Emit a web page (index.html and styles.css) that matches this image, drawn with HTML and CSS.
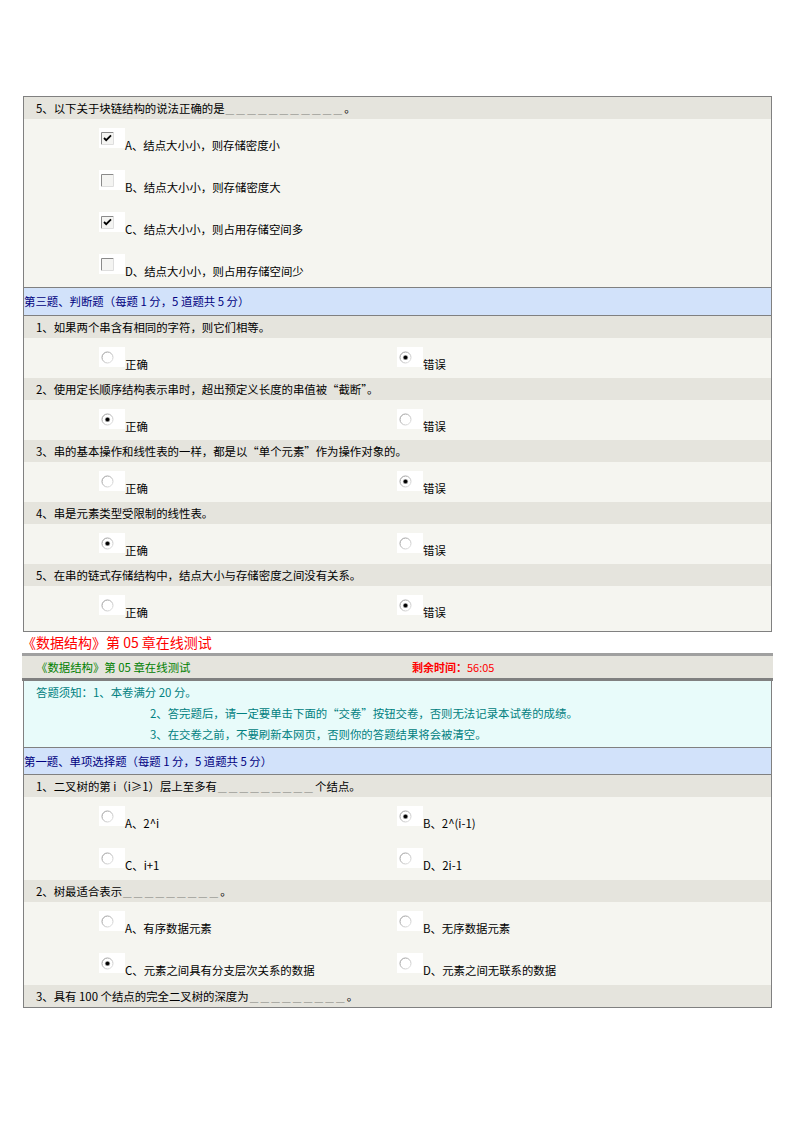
FILE: index.html
```html
<!DOCTYPE html>
<html lang="zh-CN">
<head>
  <meta charset="UTF-8">
  <meta name="viewport" content="width=device-width, initial-scale=1.0">
  <title>《数据结构》第05章在线测试</title>
  <link rel="stylesheet" href="styles.css">
</head>
<body>

  <!-- shared icons -->
  <svg class="svg-defs" width="0" height="0">
    <defs>
      <linearGradient id="rim" x1="0" y1="0" x2="1" y2="1">
        <stop offset="0" stop-color="#8c8c8c"/>
        <stop offset="1" stop-color="#e8e8e8"/>
      </linearGradient>
    </defs>
    <symbol id="cb-off" viewBox="0 0 13 13">
      <rect x="1" y="1" width="11" height="11" fill="#f4f4f2"/>
      <path d="M0.5 12.5V0.5H12.5" fill="none" stroke="#8a8a8a"/>
      <path d="M12.5 0.5V12.5H0.5" fill="none" stroke="#dedede"/>
    </symbol>
    <symbol id="cb-on" viewBox="0 0 13 13">
      <rect x="1" y="1" width="11" height="11" fill="#f4f4f2"/>
      <path d="M0.5 12.5V0.5H12.5" fill="none" stroke="#8a8a8a"/>
      <path d="M12.5 0.5V12.5H0.5" fill="none" stroke="#dedede"/>
      <path d="M3 6l2.2 2.2L10 3.4" fill="none" stroke="#000" stroke-width="1.8"/>
    </symbol>
    <symbol id="rd-off" viewBox="0 0 13 13">
      <circle cx="6.5" cy="6.5" r="5.5" fill="#fff" stroke="url(#rim)"/>
    </symbol>
    <symbol id="rd-on" viewBox="0 0 13 13">
      <circle cx="6.5" cy="6.5" r="5.5" fill="#fff" stroke="url(#rim)"/>
      <circle cx="6.5" cy="6.5" r="2.6" fill="#9a9a9a"/>
      <circle cx="6.5" cy="6.5" r="1.8" fill="#000"/>
    </symbol>
  </svg>

  <div class="page">

    <!-- Previous questions -->
    <div class="paper">
      <div class="q">5、以下关于块链结构的说法正确的是<span class="blank">＿＿＿＿＿＿＿＿＿＿＿</span>。</div>
      <div class="opts one">
        <div class="opt"><span class="mark"><svg class="ico"><use href="#cb-on"/></svg></span><span class="opt-text">A、结点大小小，则存储密度小</span></div>
        <div class="opt"><span class="mark"><svg class="ico"><use href="#cb-off"/></svg></span><span class="opt-text">B、结点大小小，则存储密度大</span></div>
        <div class="opt"><span class="mark"><svg class="ico"><use href="#cb-on"/></svg></span><span class="opt-text">C、结点大小小，则占用存储空间多</span></div>
        <div class="opt"><span class="mark"><svg class="ico"><use href="#cb-off"/></svg></span><span class="opt-text">D、结点大小小，则占用存储空间少</span></div>
      </div>

      <div class="section-title">第三题、判断题（每题 1 分，5 道题共 5 分）</div>

      <div class="q">1、如果两个串含有相同的字符，则它们相等。</div>
      <div class="opts two judge">
        <div class="opt"><span class="mark"><svg class="ico"><use href="#rd-off"/></svg></span><span class="opt-text">正确</span></div>
        <div class="opt"><span class="mark"><svg class="ico"><use href="#rd-on"/></svg></span><span class="opt-text">错误</span></div>
      </div>
      <div class="q">2、使用定长顺序结构表示串时，超出预定义长度的串值被“截断”。</div>
      <div class="opts two judge">
        <div class="opt"><span class="mark"><svg class="ico"><use href="#rd-on"/></svg></span><span class="opt-text">正确</span></div>
        <div class="opt"><span class="mark"><svg class="ico"><use href="#rd-off"/></svg></span><span class="opt-text">错误</span></div>
      </div>
      <div class="q">3、串的基本操作和线性表的一样，都是以“单个元素”作为操作对象的。</div>
      <div class="opts two judge">
        <div class="opt"><span class="mark"><svg class="ico"><use href="#rd-off"/></svg></span><span class="opt-text">正确</span></div>
        <div class="opt"><span class="mark"><svg class="ico"><use href="#rd-on"/></svg></span><span class="opt-text">错误</span></div>
      </div>
      <div class="q">4、串是元素类型受限制的线性表。</div>
      <div class="opts two judge">
        <div class="opt"><span class="mark"><svg class="ico"><use href="#rd-on"/></svg></span><span class="opt-text">正确</span></div>
        <div class="opt"><span class="mark"><svg class="ico"><use href="#rd-off"/></svg></span><span class="opt-text">错误</span></div>
      </div>
      <div class="q">5、在串的链式存储结构中，结点大小与存储密度之间没有关系。</div>
      <div class="opts two judge last">
        <div class="opt"><span class="mark"><svg class="ico"><use href="#rd-off"/></svg></span><span class="opt-text">正确</span></div>
        <div class="opt"><span class="mark"><svg class="ico"><use href="#rd-on"/></svg></span><span class="opt-text">错误</span></div>
      </div>
    </div>

    <!-- Test header -->
    <div class="test-title">《数据结构》第 05 章在线测试</div>
    <div class="test-bar">
      <span class="bar-name">《数据结构》第 05 章在线测试</span>
      <span class="timer"><b>剩余时间：</b>56:05</span>
    </div>

    <div class="paper lower">
      <div class="notice">
        <div class="notice-line">答题须知：1、本卷满分 20 分。</div>
        <div class="notice-line indent">2、答完题后，请一定要单击下面的“交卷”按钮交卷，否则无法记录本试卷的成绩。</div>
        <div class="notice-line indent">3、在交卷之前，不要刷新本网页，否则你的答题结果将会被清空。</div>
      </div>

      <div class="section-title">第一题、单项选择题（每题 1 分，5 道题共 5 分）</div>

      <div class="q">1、二叉树的第 i（i≥1）层上至多有<span class="blank">＿＿＿＿＿＿＿＿＿</span>个结点。</div>
      <div class="opts two choice">
        <div class="opt"><span class="mark"><svg class="ico"><use href="#rd-off"/></svg></span><span class="opt-text">A、2^i</span></div>
        <div class="opt"><span class="mark"><svg class="ico"><use href="#rd-on"/></svg></span><span class="opt-text">B、2^(i-1)</span></div>
        <div class="opt"><span class="mark"><svg class="ico"><use href="#rd-off"/></svg></span><span class="opt-text">C、i+1</span></div>
        <div class="opt"><span class="mark"><svg class="ico"><use href="#rd-off"/></svg></span><span class="opt-text">D、2i-1</span></div>
      </div>
      <div class="q">2、树最适合表示<span class="blank">＿＿＿＿＿＿＿＿＿</span>。</div>
      <div class="opts two choice">
        <div class="opt"><span class="mark"><svg class="ico"><use href="#rd-off"/></svg></span><span class="opt-text">A、有序数据元素</span></div>
        <div class="opt"><span class="mark"><svg class="ico"><use href="#rd-off"/></svg></span><span class="opt-text">B、无序数据元素</span></div>
        <div class="opt"><span class="mark"><svg class="ico"><use href="#rd-on"/></svg></span><span class="opt-text">C、元素之间具有分支层次关系的数据</span></div>
        <div class="opt"><span class="mark"><svg class="ico"><use href="#rd-off"/></svg></span><span class="opt-text">D、元素之间无联系的数据</span></div>
      </div>
      <div class="q">3、具有 100 个结点的完全二叉树的深度为<span class="blank">＿＿＿＿＿＿＿＿＿</span>。</div>
    </div>

  </div>

</body>
</html>
```

FILE: styles.css
```css
body {
  font-family: "Noto Sans CJK SC", "Noto Sans", sans-serif;
  font-size: 11.4px;
  color: black;
  background-color: white;
  margin: 0;
  padding: 0;
}
.svg-defs {
  display: block;
  width: 0;
  height: 0;
}
/* Page */
.page {
  width: 749px;
  padding: 96px 0 0 23px;
}
.paper {
  border: 1px solid #808080;
  background-color: #f5f5f0;
}
.paper.lower {
  border-top: none;
}
/* Question row */
.q {
  background-color: #e5e4dd;
  height: 22px;
  line-height: 22px;
  padding-left: 12px;
  white-space: nowrap;
}
.blank {
  font-size: 8.6px;
  letter-spacing: 2.2px;
  margin-left: 1px;
}
/* Options */
.opts.one {
  padding-left: 75px;
}
.opts.two {
  display: grid;
  grid-template-columns: 298px 1fr;
  padding-left: 75px;
}
.opt {
  display: flex;
  align-items: flex-start;
  height: 42px;
  padding-top: 9px;
  box-sizing: border-box;
}
.judge .opt {
  height: 40px;
}
.judge.last {
  padding-bottom: 5px;
}
.choice .opt {
  height: 41.5px;
}
.mark {
  width: 26px;
  height: 20px;
  flex-shrink: 0;
  background-color: white;
  padding: 4px 0 0 2px;
  box-sizing: border-box;
}
.ico {
  display: block;
  width: 13px;
  height: 13px;
}
.opt-text {
  margin-top: 10px;
  line-height: 14px;
  white-space: nowrap;
}
/* Section title */
.section-title {
  background-color: #d2e2fa;
  color: #000080;
  height: 27px;
  line-height: 27px;
  border-top: 1px solid #808080;
  border-bottom: 1px solid #808080;
}
.lower .section-title {
  height: 26px;
  line-height: 26px;
}
/* Test header */
.test-title {
  color: red;
  font-size: 14px;
  line-height: 20px;
  margin-left: -1px;
}
.test-bar {
  display: grid;
  grid-template-columns: 376px 1fr;
  width: 751px;
  margin: 1px 0 0 -1px;
  padding-left: 14px;
  box-sizing: border-box;
  height: 28px;
  line-height: 22px;
  background-color: #e5e4dd;
  border-top: 3px solid #a0a0a0;
  border-bottom: 3px solid #808080;
}
.bar-name {
  color: #008000;
}
.timer {
  color: red;
  font-size: 11px;
}
.timer b {
  font-weight: bold;
}
/* Notice */
.notice {
  background-color: #e8fbfa;
  color: #008080;
  padding: 1px 0 2px 12px;
}
.notice-line {
  line-height: 21px;
}
.notice-line.indent {
  padding-left: 114px;
}
```
